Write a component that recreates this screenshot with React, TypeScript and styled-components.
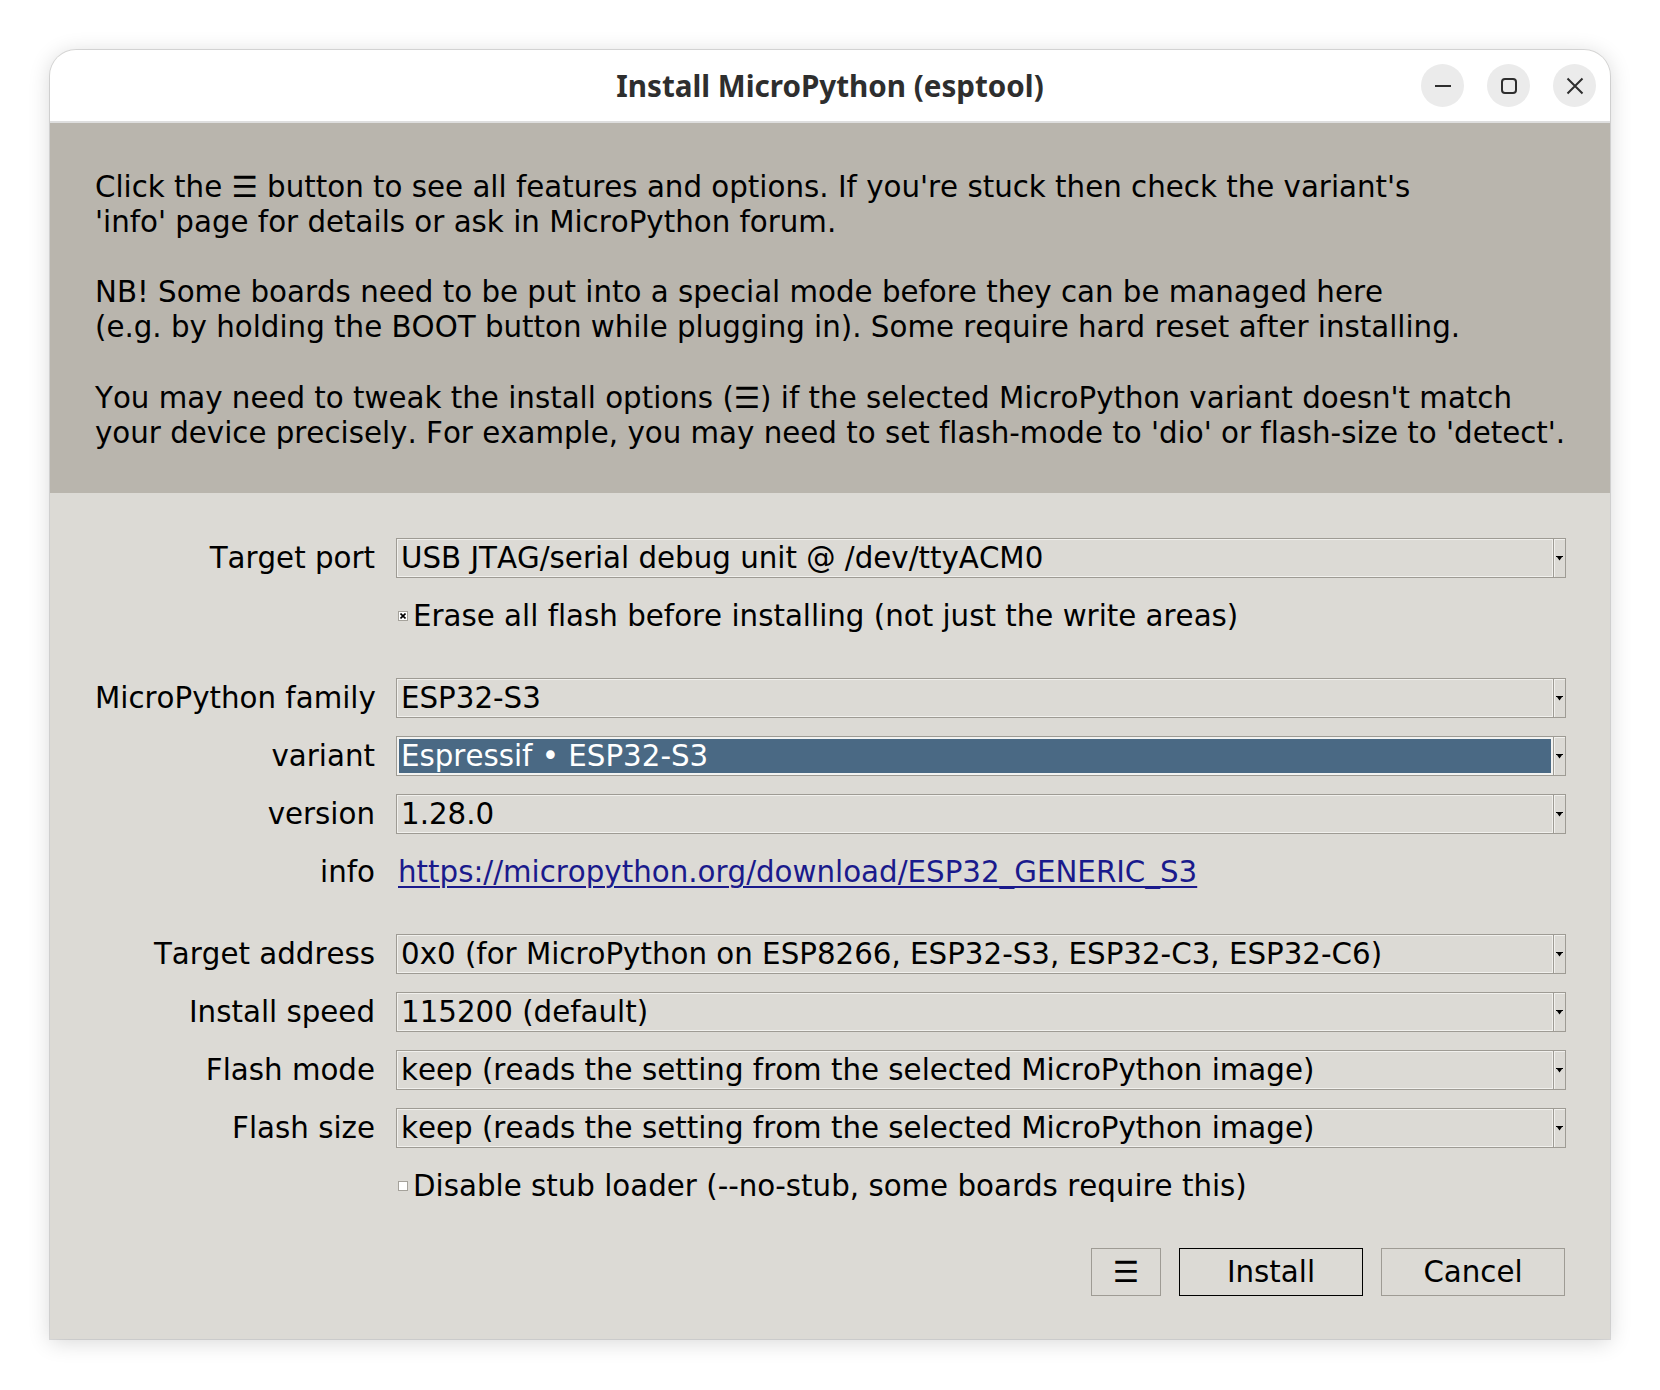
import React from "react";
import styled, { createGlobalStyle, css } from "styled-components";

const GlobalStyle = createGlobalStyle`
  html, body {
    margin: 0;
    padding: 0;
    background: #ffffff;
  }
  * {
    box-sizing: border-box;
  }
`;

const UI_FONT = `"DejaVu Sans", "Liberation Sans", sans-serif`;
const BORDER = "#9e9b94";
const FACE = "#dcdad5";

const Desktop = styled.div`
  width: 1660px;
  height: 1390px;
  padding: 50px;
`;

const Window = styled.div`
  width: 1560px;
  height: 1289px;
  display: flex;
  flex-direction: column;
  border-radius: 26px 26px 0 0;
  overflow: hidden;
  background: ${FACE};
  box-shadow: 0 0 0 1px rgba(0, 0, 0, 0.12), 0 3px 22px rgba(0, 0, 0, 0.16);
`;

const TitleBar = styled.div`
  position: relative;
  height: 73px;
  flex-shrink: 0;
  display: flex;
  align-items: center;
  justify-content: center;
  background: #ffffff;
  border-bottom: 2px solid #dedede;
`;

const Title = styled.div`
  font-family: "Noto Sans", "Open Sans", sans-serif;
  font-weight: 700;
  font-size: 29.6px;
  color: #2e2e2e;
`;

const TitleButtons = styled.div`
  position: absolute;
  right: 14px;
  top: 14px;
  display: flex;
  gap: 23px;
`;

const TitleButton = styled.div`
  width: 43px;
  height: 43px;
  border-radius: 50%;
  background: #ebebeb;
  display: flex;
  align-items: center;
  justify-content: center;
  color: #2e2e2e;
`;

const TkText = css`
  font-family: ${UI_FONT};
  font-size: 29.3px;
  font-kerning: none;
  font-variant-ligatures: none;
  color: #000000;
`;

const Banner = styled.div`
  ${TkText};
  height: 370px;
  flex-shrink: 0;
  background: #b9b5ad;
  padding: 47px 45px 0;
  line-height: 35.1px;
  white-space: pre;
`;

const Form = styled.div`
  ${TkText};
  flex: 1;
  display: flex;
  flex-direction: column;
  gap: 18px;
  padding: 45px 44px 0 45px;
`;

const Row = styled.div<{ $spaced?: number }>`
  display: flex;
  align-items: center;
  height: 40px;
  ${({ $spaced }) => $spaced && css`
    margin-top: ${$spaced}px;
  `}
`;

const Label = styled.div`
  width: 280px;
  flex-shrink: 0;
  text-align: right;
  margin-right: 21px;
  white-space: nowrap;
`;

const ComboBox = styled.div`
  flex: 1;
  height: 40px;
  display: flex;
  border: 1px solid ${BORDER};
  background: ${FACE};
`;

const ComboText = styled.div<{ $selected?: boolean }>`
  flex: 1;
  display: flex;
  align-items: center;
  padding-left: 4px;
  white-space: nowrap;
  box-shadow: inset 0 0 0 1px #f1f0ed;
  ${({ $selected }) => $selected && css`
    background: #4a6984;
    color: #ffffff;
    box-shadow: inset 0 0 0 2px #f3f3f1;
  `}
`;

const ComboArrow = styled.div`
  width: 12px;
  flex-shrink: 0;
  display: flex;
  align-items: center;
  justify-content: center;
  border-left: 1px solid ${BORDER};
  box-shadow: inset 1px 1px 0 #f1f0ed;
`;

const CheckRow = styled.label`
  display: flex;
  align-items: center;
  gap: 5px;
  margin-left: 2px;
  white-space: nowrap;
`;

const CheckBox = styled.span`
  width: 10px;
  height: 10px;
  display: flex;
  align-items: center;
  justify-content: center;
  background: #ffffff;
  border: 1px solid #a5a29b;
`;

const Link = styled.a`
  color: #1a1a8c;
  text-decoration: underline;
  text-underline-offset: 4px;
  text-decoration-thickness: 2px;
  margin-left: 2px;
  cursor: pointer;
`;

const ButtonBar = styled.div`
  display: flex;
  justify-content: flex-end;
  gap: 18px;
  margin-top: 24px;
  margin-right: 1px;
`;

const Button = styled.button<{ $wide?: boolean; $focused?: boolean }>`
  ${TkText};
  height: 48px;
  width: ${({ $wide }) => ($wide ? "184px" : "70px")};
  background: ${FACE};
  border: 1px solid ${({ $focused }) => ($focused ? "#000000" : BORDER)};
  border-radius: 0;
  padding: 0;
`;

const Arrow = () => (
  <svg width="7" height="5" viewBox="0 0 7 5">
    <polygon points="0,0 7,0 7,1 6,1 3.5,4.5 1,1 0,1" fill="#000" />
  </svg>
);

const Combo = ({ value, selected }: { value: string; selected?: boolean }) => (
  <ComboBox>
    <ComboText $selected={selected}>{value}</ComboText>
    <ComboArrow>
      <Arrow />
    </ComboArrow>
  </ComboBox>
);

const Check = ({ checked, text }: { checked?: boolean; text: string }) => (
  <CheckRow>
    <CheckBox>
      {checked && (
        <svg width="6" height="6" viewBox="0 0 6 6">
          <path d="M0.5 0.5L5.5 5.5M5.5 0.5L0.5 5.5" stroke="#000" strokeWidth="1.6" />
        </svg>
      )}
    </CheckBox>
    {text}
  </CheckRow>
);

const BANNER_TEXT = `Click the ☰ button to see all features and options. If you're stuck then check the variant's
'info' page for details or ask in MicroPython forum.

NB! Some boards need to be put into a special mode before they can be managed here
(e.g. by holding the BOOT button while plugging in). Some require hard reset after installing.

You may need to tweak the install options (☰) if the selected MicroPython variant doesn't match
your device precisely. For example, you may need to set flash-mode to 'dio' or flash-size to 'detect'.`;

export default function App() {
  return (
    <Desktop>
      <GlobalStyle />
      <Window>
        <TitleBar>
          <Title>Install MicroPython (esptool)</Title>
          <TitleButtons>
            <TitleButton>
              <svg width="18" height="18" viewBox="0 0 18 18">
                <path d="M1 9h16" stroke="currentColor" strokeWidth="2" />
              </svg>
            </TitleButton>
            <TitleButton>
              <svg width="18" height="18" viewBox="0 0 18 18">
                <rect x="2" y="2" width="14" height="14" rx="3" fill="none" stroke="currentColor" strokeWidth="2" />
              </svg>
            </TitleButton>
            <TitleButton>
              <svg width="18" height="18" viewBox="0 0 18 18">
                <path d="M1.5 1.5l15 15M16.5 1.5l-15 15" stroke="currentColor" strokeWidth="2" />
              </svg>
            </TitleButton>
          </TitleButtons>
        </TitleBar>

        <Banner>{BANNER_TEXT}</Banner>

        <Form>
          <Row>
            <Label>Target port</Label>
            <Combo value="USB JTAG/serial debug unit @ /dev/ttyACM0" />
          </Row>
          <Row>
            <Label />
            <Check checked text="Erase all flash before installing (not just the write areas)" />
          </Row>

          <Row $spaced={24}>
            <Label>MicroPython family</Label>
            <Combo value="ESP32-S3" />
          </Row>
          <Row>
            <Label>variant</Label>
            <Combo value="Espressif • ESP32-S3" selected />
          </Row>
          <Row>
            <Label>version</Label>
            <Combo value="1.28.0" />
          </Row>
          <Row>
            <Label>info</Label>
            <Link>https://micropython.org/download/ESP32_GENERIC_S3</Link>
          </Row>

          <Row $spaced={24}>
            <Label>Target address</Label>
            <Combo value="0x0 (for MicroPython on ESP8266, ESP32-S3, ESP32-C3, ESP32-C6)" />
          </Row>
          <Row>
            <Label>Install speed</Label>
            <Combo value="115200 (default)" />
          </Row>
          <Row>
            <Label>Flash mode</Label>
            <Combo value="keep (reads the setting from the selected MicroPython image)" />
          </Row>
          <Row>
            <Label>Flash size</Label>
            <Combo value="keep (reads the setting from the selected MicroPython image)" />
          </Row>
          <Row>
            <Label />
            <Check text="Disable stub loader (--no-stub, some boards require this)" />
          </Row>

          <ButtonBar>
            <Button>☰</Button>
            <Button $wide $focused>Install</Button>
            <Button $wide>Cancel</Button>
          </ButtonBar>
        </Form>
      </Window>
    </Desktop>
  );
}
